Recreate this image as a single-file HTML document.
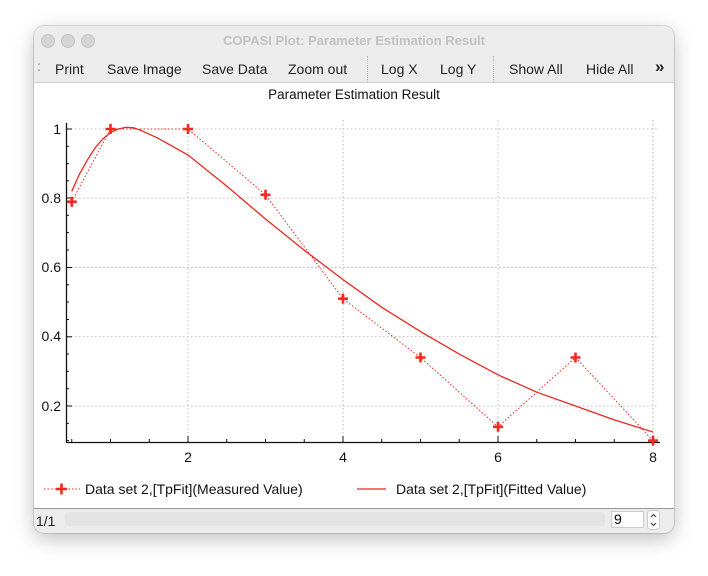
<!DOCTYPE html>
<html><head><style>
body{margin:0;width:708px;height:576px;background:#fff;font-family:"Liberation Sans",sans-serif;position:relative;overflow:hidden}
.win{position:absolute;left:34px;top:26px;width:640px;height:507px;border-radius:10px;background:#ececec;box-shadow:0 6px 20px rgba(0,0,0,.25),0 0 0 1px rgba(0,0,0,.12);overflow:hidden}
.t{position:absolute;top:7px;left:0;width:640px;text-align:center;font-size:13px;font-weight:bold;color:#c2c2c2}
.dot{position:absolute;top:8px;width:12px;height:12px;border-radius:50%;background:#d4d4d4;border:0.5px solid #c4c4c4}
.tb{position:absolute;top:35px;font-size:14px;color:#222}
.sep{position:absolute;top:30px;height:26px;border-left:1px dotted #bbb}
.plot{position:absolute;left:0;top:56px;width:640px;height:425px;background:#fff;border-top:1px solid #cfcfcf;border-bottom:1px solid #999}
</style></head><body>
<div class="win">
<div class="dot" style="left:7px"></div><div class="dot" style="left:27px"></div><div class="dot" style="left:47px"></div>
<div class="t">COPASI Plot: Parameter Estimation Result</div>
<div class="tb" style="left:3px;top:32px;color:#888">:</div>
<div class="tb" style="left:21px">Print</div>
<div class="tb" style="left:73px">Save Image</div>
<div class="tb" style="left:168px">Save Data</div>
<div class="tb" style="left:254px">Zoom out</div>
<div class="sep" style="left:333px"></div>
<div class="tb" style="left:347px">Log X</div>
<div class="tb" style="left:406px">Log Y</div>
<div class="sep" style="left:459px"></div>
<div class="tb" style="left:475px">Show All</div>
<div class="tb" style="left:552px">Hide All</div>
<div class="tb" style="left:621px;top:31px;font-weight:bold;font-size:17px">»</div>
<div class="plot"></div>
<div style="position:absolute;left:2px;top:487px;font-size:14px;color:#222">1/1</div>
<div style="position:absolute;left:31px;top:486px;width:540px;height:14px;background:#e4e4e4;border-radius:3px"></div>
<div style="position:absolute;left:577px;top:485px;width:33px;height:17px;background:#fff;border:1px solid #ccc;font-size:14px;padding-left:2px;box-sizing:border-box;line-height:15px">9</div>
<svg style="position:absolute;left:613px;top:484px" width="13" height="20"><rect x="0.5" y="0.5" width="12" height="19" rx="3" fill="#fff" stroke="#ccc"/><path d="M4 7l2.5-2.5L9 7M4 13l2.5 2.5L9 13" fill="none" stroke="#444" stroke-width="1.2"/></svg>
</div>
<svg width="708" height="576" style="position:absolute;left:0;top:0" font-family="Liberation Sans,sans-serif" font-size="14">
<text x="354" y="99" text-anchor="middle" font-size="13.5" fill="#111">Parameter Estimation Result</text>
<g stroke="#bbb" stroke-dasharray="1.5,2.5" stroke-width="1">
<line x1="67" y1="129" x2="659" y2="129"/><line x1="67" y1="198" x2="659" y2="198"/><line x1="67" y1="267.5" x2="659" y2="267.5"/><line x1="67" y1="336.8" x2="659" y2="336.8"/><line x1="67" y1="406" x2="659" y2="406"/>
<line x1="188" y1="120" x2="188" y2="442"/><line x1="343" y1="120" x2="343" y2="442"/><line x1="498" y1="120" x2="498" y2="442"/><line x1="653" y1="120" x2="653" y2="442"/>
</g>
<g stroke="#111" stroke-width="1.3">
<line x1="66.5" y1="123" x2="66.5" y2="442.5"/><line x1="66" y1="442.5" x2="660" y2="442.5"/>
</g>
<g stroke="#111" stroke-width="1">
<line x1="66" y1="129" x2="72" y2="129"/><line x1="66" y1="198" x2="72" y2="198"/><line x1="66" y1="267.5" x2="72" y2="267.5"/><line x1="66" y1="336.8" x2="72" y2="336.8"/><line x1="66" y1="406" x2="72" y2="406"/>
<line x1="66" y1="146.3" x2="69" y2="146.3"/><line x1="66" y1="163.6" x2="69" y2="163.6"/><line x1="66" y1="180.8" x2="69" y2="180.8"/>
<line x1="66" y1="215.3" x2="69" y2="215.3"/><line x1="66" y1="232.6" x2="69" y2="232.6"/><line x1="66" y1="250" x2="69" y2="250"/>
<line x1="66" y1="284.8" x2="69" y2="284.8"/><line x1="66" y1="302" x2="69" y2="302"/><line x1="66" y1="319.5" x2="69" y2="319.5"/>
<line x1="66" y1="354" x2="69" y2="354"/><line x1="66" y1="371.4" x2="69" y2="371.4"/><line x1="66" y1="388.7" x2="69" y2="388.7"/>
<line x1="66" y1="423.3" x2="69" y2="423.3"/><line x1="66" y1="440.6" x2="69" y2="440.6"/>
<line x1="188" y1="436" x2="188" y2="442"/><line x1="343" y1="436" x2="343" y2="442"/><line x1="498" y1="436" x2="498" y2="442"/><line x1="653" y1="436" x2="653" y2="442"/>
<line x1="71.75" y1="439" x2="71.75" y2="442"/><line x1="110.5" y1="439" x2="110.5" y2="442"/><line x1="149.25" y1="439" x2="149.25" y2="442"/><line x1="226.75" y1="439" x2="226.75" y2="442"/><line x1="265.5" y1="439" x2="265.5" y2="442"/><line x1="304.25" y1="439" x2="304.25" y2="442"/><line x1="381.75" y1="439" x2="381.75" y2="442"/><line x1="420.5" y1="439" x2="420.5" y2="442"/><line x1="459.25" y1="439" x2="459.25" y2="442"/><line x1="536.75" y1="439" x2="536.75" y2="442"/><line x1="575.5" y1="439" x2="575.5" y2="442"/><line x1="614.25" y1="439" x2="614.25" y2="442"/>
</g>
<g fill="#111" text-anchor="end">
<text x="61" y="134">1</text><text x="61" y="203">0.8</text><text x="61" y="272">0.6</text><text x="61" y="341">0.4</text><text x="61" y="411">0.2</text>
</g>
<g fill="#111" text-anchor="middle">
<text x="188" y="462">2</text><text x="343" y="462">4</text><text x="498" y="462">6</text><text x="653" y="462">8</text>
</g>
<polyline fill="none" stroke="#e8281e" stroke-width="1.3" points="71.75,191.3 79.5,174 87.25,160.2 95,148 102.75,139 110.5,132.5 118.25,129 126,127.3 133.7,127.8 141.5,130.7 157,137.7 172.5,146.3 188,155 226.75,186.1 265.5,219 304.25,250.2 343,279.6 381.75,307.3 420.5,331.6 459.25,354.1 498,374.8 536.75,392.2 575.5,406 614.25,419.9 653,432"/>
<polyline fill="none" stroke="#e8281e" stroke-width="1" stroke-dasharray="1.5,2" points="71.75,201.7 110.5,129 188,129 265.5,194.8 343,298.7 420.5,357.5 498,426.8 575.5,357.5 653,440.6"/>
<g stroke="#f5281e" stroke-width="2.6">
<path d="M66.75 201.7h10M71.75 196.7v10M105.5 129h10M110.5 124v10M183 129h10M188 124v10M260.5 194.8h10M265.5 189.8v10M338 298.7h10M343 293.7v10M415.5 357.5h10M420.5 352.5v10M493 426.8h10M498 421.8v10M570.5 357.5h10M575.5 352.5v10M648 440.6h10M653 435.6v10"/>
</g>
<line x1="44" y1="489" x2="80" y2="489" stroke="#e8281e" stroke-dasharray="1.5,2"/>
<path d="M56 489h11M61.5 483.5v11" stroke="#f5281e" stroke-width="2.6"/>
<text x="85" y="494" fill="#111">Data set 2,[TpFit](Measured Value)</text>
<line x1="357" y1="489" x2="386" y2="489" stroke="#e8281e" stroke-width="1.3"/>
<text x="396" y="494" fill="#111">Data set 2,[TpFit](Fitted Value)</text>
</svg>
</body></html>
